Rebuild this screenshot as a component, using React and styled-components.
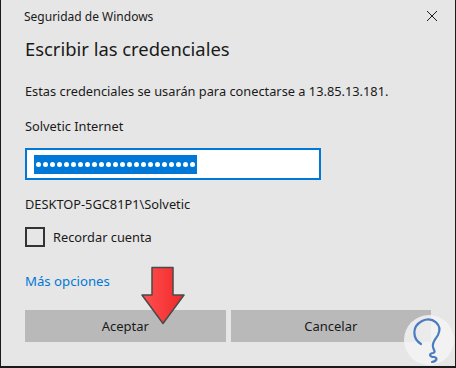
import React from 'react';
import styled, { createGlobalStyle } from 'styled-components';

const Global = createGlobalStyle`
    html, body {
        margin: 0;
        padding: 0;
        background: #e6e6e6;
    }
    * { box-sizing: border-box; }
`;

const Dialog = styled.div`
    position: relative;
    width: 456px;
    height: 368px;
    background: #e6e6e6;
    border-left: 1px solid #1a1a1a;
    border-right: 1px solid #1a1a1a;
    border-bottom: 2px solid #1a1a1a;
    font-family: "Noto Sans", "Open Sans", sans-serif;
    color: #1a1a1a;
    overflow: hidden;
`;

const TitleBar = styled.div`
    display: flex;
    justify-content: space-between;
    align-items: center;
    height: 32px;
    padding: 0 17px 0 23px;
    font-size: 12px;
`;

const Close = styled.svg`
    width: 12px;
    height: 12px;
`;

const Body = styled.div`
    padding: 0 24px;
`;

const Heading = styled.h1`
    margin: 2px 0 0;
    font-size: 18.4px;
    font-weight: 400;
    line-height: 30px;
`;

const Text = styled.div`
    font-size: 12.8px;
    line-height: 18px;
    margin-top: ${p => p.$top || 0}px;
`;

const Field = styled.div`
    margin-top: 13px;
    width: 296px;
    height: 32px;
    border: 2px solid #0078d7;
    background: #fff;
    display: flex;
    align-items: center;
    padding-left: 7px;
`;

const Selection = styled.div`
    display: flex;
    align-items: center;
    gap: 2px;
    height: 19px;
    padding: 0 2px;
    background: #0078d7;
`;

const Dot = styled.span`
    width: 5px;
    height: 5px;
    border-radius: 50%;
    background: #fff;
`;

const CheckRow = styled.label`
    display: flex;
    align-items: center;
    gap: 8px;
    margin-top: 14px;
    font-size: 12.8px;
`;

const Box = styled.span`
    width: 20px;
    height: 20px;
    border: 2px solid #333;
`;

const Link = styled.a`
    display: block;
    margin-top: 25px;
    font-size: 13.2px;
    line-height: 18px;
    color: #0078d7;
    text-decoration: none;
`;

const Buttons = styled.div`
    display: flex;
    gap: 5px;
    margin-top: 20px;
    width: 406px;
`;

const Button = styled.button`
    flex: 1;
    height: 32px;
    border: none;
    background: #b9b9b9;
    font-family: inherit;
    font-size: 13px;
    color: #1a1a1a;
`;

const Arrow = styled.svg`
    position: absolute;
    left: 139px;
    top: 266px;
    width: 46px;
    height: 60px;
`;

const Logo = styled.svg`
    position: absolute;
    left: 402px;
    top: 314px;
    width: 54px;
    height: 54px;
`;

export default function App() {
    const dots = Array.from({ length: 23 });
    return (
        <>
            <Global />
            <Dialog>
                <TitleBar>
                    <span>Seguridad de Windows</span>
                    <Close viewBox="0 0 12 12">
                        <path d="M1 1 L11 11 M11 1 L1 11" stroke="#1a1a1a" strokeWidth="1" />
                    </Close>
                </TitleBar>
                <Body>
                    <Heading>Escribir las credenciales</Heading>
                    <Text $top={18}>Estas credenciales se usarán para conectarse a 13.85.13.181.</Text>
                    <Text $top={17}>Solvetic Internet</Text>
                    <Field>
                        <Selection>
                            {dots.map((_, i) => <Dot key={i} />)}
                        </Selection>
                    </Field>
                    <Text $top={15}>DESKTOP-5GC81P1\Solvetic</Text>
                    <CheckRow>
                        <Box />
                        Recordar cuenta
                    </CheckRow>
                    <Link href="#">Más opciones</Link>
                    <Buttons>
                        <Button>Aceptar</Button>
                        <Button>Cancelar</Button>
                    </Buttons>
                </Body>
                <Arrow viewBox="0 0 46 60">
                    <defs>
                        <linearGradient id="ar" x1="0" y1="0" x2="1" y2="0">
                            <stop offset="0" stopColor="#ff5050" />
                            <stop offset="1" stopColor="#f02828" />
                        </linearGradient>
                    </defs>
                    <path d="M12 1.5 H33 V29 H44 L23 57.5 L2 29 H12 Z" fill="url(#ar)" stroke="#4a4a4a" strokeWidth="1.5" strokeLinejoin="round" />
                </Arrow>
                <Logo viewBox="0 0 54 54">
                    <circle cx="26" cy="26" r="25" fill="#f3f3f3" fillOpacity="0.85" />
                    <path d="M18 30 C10 25 8 13 19 7 C30 2 40 11 35 21 C32 26 29 28 30 33 C31 37 33 38 30 39 C25 40 27 43 31 43 C35 44 34 47 29 48"
                        fill="none" stroke="#4a7cc0" strokeWidth="2.2" strokeLinecap="round" strokeLinejoin="round" />
                </Logo>
            </Dialog>
        </>
    );
}
